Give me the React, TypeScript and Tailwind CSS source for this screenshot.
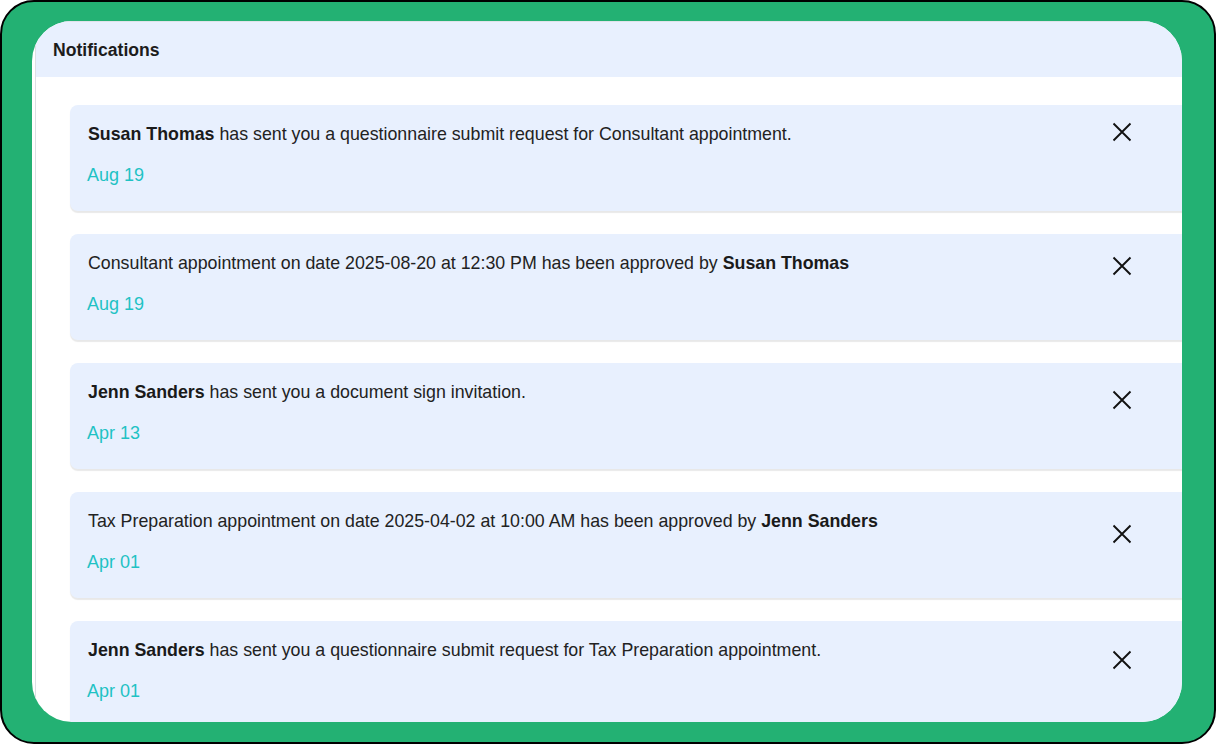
import React from "react";

type Note = {
  parts: { text: string; bold?: boolean }[];
  date: string;
  xOffset: string;
};

const notes: Note[] = [
  {
    parts: [
      { text: "Susan Thomas", bold: true },
      { text: " has sent you a questionnaire submit request for Consultant appointment." },
    ],
    date: "Aug 19",
    xOffset: "mt-[17px]",
  },
  {
    parts: [
      { text: "Consultant appointment on date 2025-08-20 at 12:30 PM has been approved by " },
      { text: "Susan Thomas", bold: true },
    ],
    date: "Aug 19",
    xOffset: "mt-[22px]",
  },
  {
    parts: [
      { text: "Jenn Sanders", bold: true },
      { text: " has sent you a document sign invitation." },
    ],
    date: "Apr 13",
    xOffset: "mt-[27px]",
  },
  {
    parts: [
      { text: "Tax Preparation appointment on date 2025-04-02 at 10:00 AM has been approved by " },
      { text: "Jenn Sanders", bold: true },
    ],
    date: "Apr 01",
    xOffset: "mt-[32px]",
  },
  {
    parts: [
      { text: "Jenn Sanders", bold: true },
      { text: " has sent you a questionnaire submit request for Tax Preparation appointment." },
    ],
    date: "Apr 01",
    xOffset: "mt-[29px]",
  },
];

function CloseIcon() {
  return (
    <svg width="20" height="20" viewBox="0 0 20 20" fill="none">
      <path d="M1.5 1.5 L18.5 18.5 M18.5 1.5 L1.5 18.5" stroke="#111" strokeWidth="1.9" />
    </svg>
  );
}

export default function App() {
  return (
    <div className="w-[1216px] h-[744px] bg-white font-['Liberation_Sans',Arial,sans-serif]">
      <div className="h-full border-2 border-black rounded-[34px] bg-[#23b173] pt-[19px] pl-[30px] pr-[32px] pb-[20px]">
        <div className="h-full bg-white rounded-[40px] overflow-hidden pl-[3px]">
          <div className="h-full border-l border-[#dcdfe4] flex flex-col">
            {/* header */}
            <div className="h-[56px] shrink-0 bg-[#e8f0fe] border-t border-[#e0e2ea] flex items-center pl-[17px]">
              <h2 className="text-[17.6px] font-bold text-[#1c1c1c] translate-y-px">Notifications</h2>
            </div>

            <div className="flex flex-col gap-[23px] pt-[28px] pl-[34px] -mr-[40px]">
              {notes.map((n, i) => (
                <div
                  key={i}
                  className="flex bg-[#e8f0fe] rounded-l-[8px] shadow-[0_2px_1px_rgba(0,0,0,0.09)] pl-[18px] pr-[90px]"
                >
                  <div className="flex-1 pt-[17px] pb-[24px]">
                    <p className="text-[17.8px] leading-[24px] text-[#222]">
                      {n.parts.map((p, j) =>
                        p.bold ? (
                          <b key={j} className="font-bold text-[#1a1a1a]">
                            {p.text}
                          </b>
                        ) : (
                          <span key={j}>{p.text}</span>
                        )
                      )}
                    </p>
                    <p className="mt-[17px] text-[18px] leading-[24px] text-[#1fc2c4] -ml-px">{n.date}</p>
                  </div>
                  <div className={n.xOffset}>
                    <CloseIcon />
                  </div>
                </div>
              ))}
            </div>
          </div>
        </div>
      </div>
    </div>
  );
}
